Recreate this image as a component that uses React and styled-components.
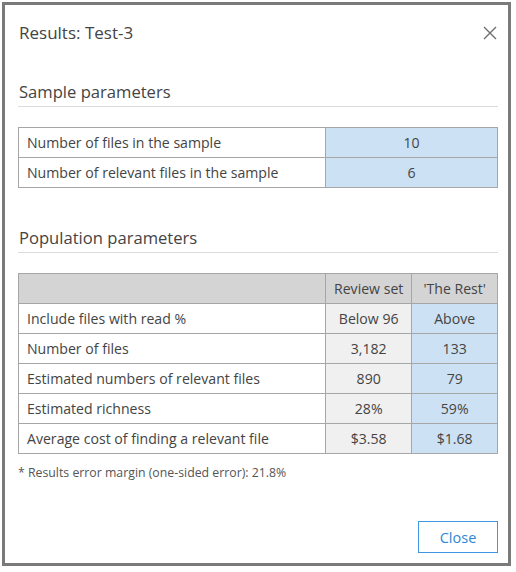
import React from "react";
import styled, { createGlobalStyle } from "styled-components";

const GlobalStyle = createGlobalStyle`
  html, body {
    margin: 0;
    padding: 0;
    background: #ffffff;
  }
  body {
    font-family: "Open Sans", "Noto Sans", sans-serif;
    color: #444444;
  }
`;

const Frame = styled.div`
  box-sizing: border-box;
  margin: 2px;
  width: 509px;
  height: 564px;
  border: 3px solid #7a7a7a;
  background: #ffffff;
  padding: 16px 10px 10px 13px;
  display: flex;
  flex-direction: column;
`;

const Header = styled.div`
  display: flex;
  align-items: center;
  justify-content: space-between;
  height: 24px;
  padding-left: 1px;
`;

const Title = styled.h1`
  margin: 0;
  font-size: 17px;
  font-weight: 400;
  line-height: 24px;
  color: #444444;
`;

const CloseIcon = styled.button`
  border: 0;
  background: none;
  padding: 0;
  width: 16px;
  height: 16px;
  display: flex;
  align-items: center;
  justify-content: center;
  cursor: pointer;
`;

const SectionTitle = styled.h2`
  margin: ${(p) => p.$top}px 0 0;
  padding: 0 0 2px 1px;
  font-size: 16.6px;
  font-weight: 400;
  line-height: 24px;
  color: #444444;
  border-bottom: 1px solid #dcdcdc;
`;

const Table = styled.table`
  margin-top: 20px;
  width: 480px;
  border-collapse: collapse;
  font-size: 14.1px;
  color: #444444;
`;

const Cell = styled.td`
  box-sizing: border-box;
  height: 30px;
  padding: 0 8px;
  border: 1px solid #a6a6a6;
  text-align: ${(p) => (p.$center ? "center" : "left")};
  background: ${(p) =>
    p.$tone === "blue"
      ? "#cce1f4"
      : p.$tone === "grey"
      ? "#f0f0f0"
      : p.$tone === "head"
      ? "#d4d4d4"
      : "#ffffff"};
  white-space: nowrap;
`;

const Note = styled.p`
  margin: 10px 0 0;
  font-size: 12.3px;
  line-height: 18px;
  color: #555555;
`;

const Footer = styled.div`
  margin-top: auto;
  display: flex;
  justify-content: flex-end;
`;

const Button = styled.button`
  width: 80px;
  height: 32px;
  border: 1px solid #3d97e3;
  background: #ffffff;
  color: #2f86d6;
  font-family: "Open Sans", "Noto Sans", sans-serif;
  font-size: 14.5px;
  cursor: pointer;
`;

const sample = [
  ["Number of files in the sample", "10"],
  ["Number of relevant files in the sample", "6"],
];

const population = [
  ["Include files with read %", "Below 96", "Above"],
  ["Number of files", "3,182", "133"],
  ["Estimated numbers of relevant files", "890", "79"],
  ["Estimated richness", "28%", "59%"],
  ["Average cost of finding a relevant file", "$3.58", "$1.68"],
];

const App = () => {
  return (
    <>
      <GlobalStyle />
      <Frame>
        <Header>
          <Title>Results: Test-3</Title>
          <CloseIcon aria-label="Close">
            <svg width="14" height="14" viewBox="0 0 14 14">
              <path
                d="M1 1 L13 13 M13 1 L1 13"
                stroke="#6e6e6e"
                strokeWidth="1.4"
                fill="none"
              />
            </svg>
          </CloseIcon>
        </Header>

        <SectionTitle $top={35}>Sample parameters</SectionTitle>
        <Table>
          <colgroup>
            <col style={{ width: "307px" }} />
            <col />
          </colgroup>
          <tbody>
            {sample.map(([label, value]) => (
              <tr key={label}>
                <Cell>{label}</Cell>
                <Cell $center $tone="blue">
                  {value}
                </Cell>
              </tr>
            ))}
          </tbody>
        </Table>

        <SectionTitle $top={38}>Population parameters</SectionTitle>
        <Table>
          <colgroup>
            <col style={{ width: "307px" }} />
            <col style={{ width: "86px" }} />
            <col />
          </colgroup>
          <thead>
            <tr>
              <Cell $tone="head" />
              <Cell $tone="head" $center>
                Review set
              </Cell>
              <Cell $tone="head" $center>
                'The Rest'
              </Cell>
            </tr>
          </thead>
          <tbody>
            {population.map(([label, review, rest]) => (
              <tr key={label}>
                <Cell>{label}</Cell>
                <Cell $center $tone="grey">
                  {review}
                </Cell>
                <Cell $center $tone="blue">
                  {rest}
                </Cell>
              </tr>
            ))}
          </tbody>
        </Table>

        <Note>* Results error margin (one-sided error): 21.8%</Note>

        <Footer>
          <Button>Close</Button>
        </Footer>
      </Frame>
    </>
  );
};

export default App;
